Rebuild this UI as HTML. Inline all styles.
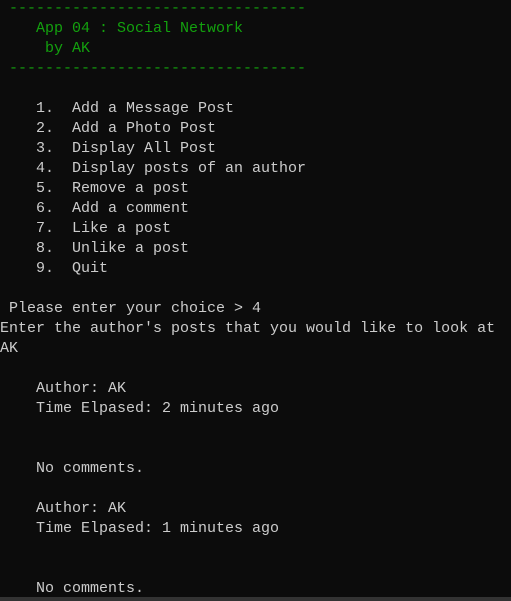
<!DOCTYPE html>
<html><head><meta charset="utf-8"><style>
html,body{margin:0;padding:0;background:#0c0c0c;width:511px;height:601px;overflow:hidden}
pre{position:absolute;left:0;top:-1px;margin:0;font-family:"Liberation Mono",monospace;font-size:15px;line-height:20px;color:#cccccc}
.g{color:#13a10e}
.bar{position:absolute;left:0;top:597px;width:511px;height:4px;background:#333}
</style></head><body>
<pre><span class="g"> ---------------------------------
    App 04 : Social Network
     by AK
 ---------------------------------</span>

    1.  Add a Message Post
    2.  Add a Photo Post
    3.  Display All Post
    4.  Display posts of an author
    5.  Remove a post
    6.  Add a comment
    7.  Like a post
    8.  Unlike a post
    9.  Quit

 Please enter your choice &gt; 4
Enter the author's posts that you would like to look at
AK

    Author: AK
    Time Elpased: 2 minutes ago


    No comments.

    Author: AK
    Time Elpased: 1 minutes ago


    No comments.</pre>
<div class="bar"></div>
</body></html>
